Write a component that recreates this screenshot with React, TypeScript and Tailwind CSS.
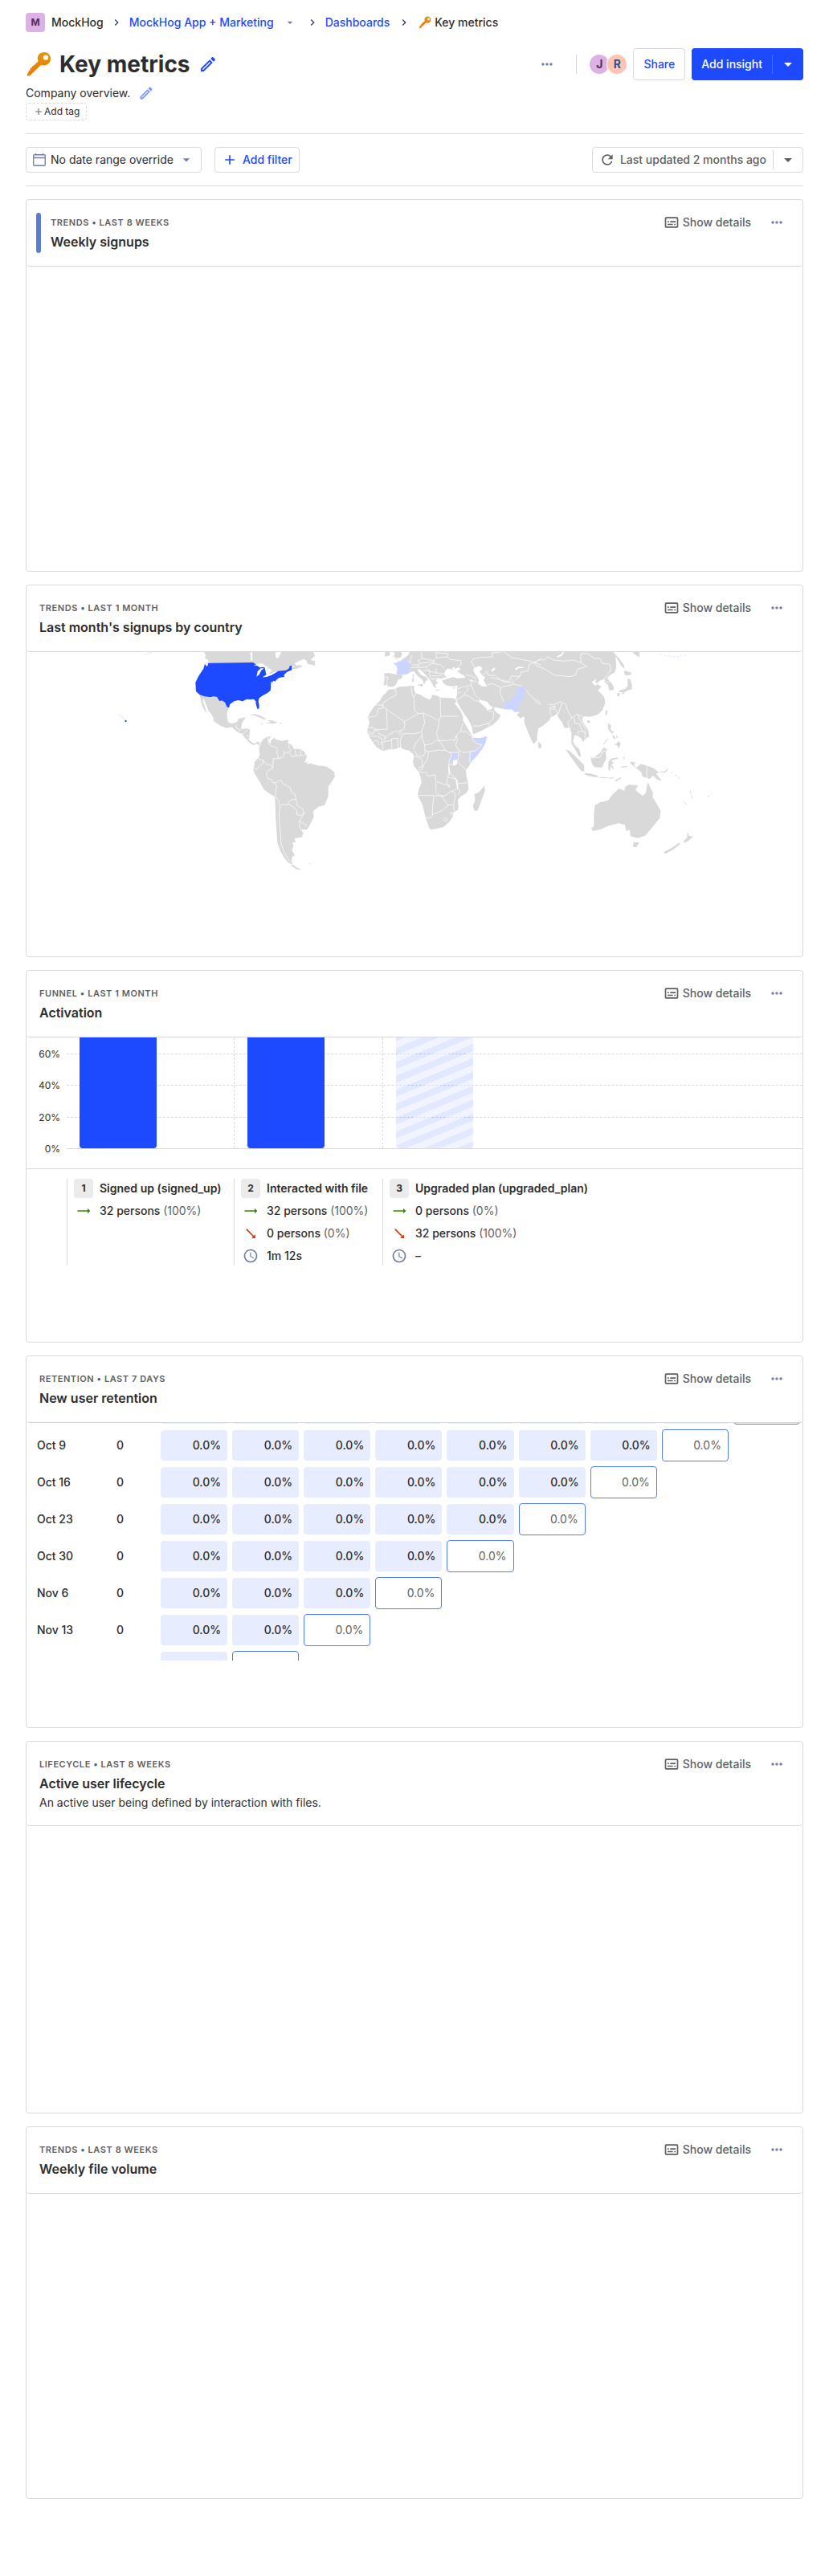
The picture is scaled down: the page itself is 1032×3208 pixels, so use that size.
import React from "react";
import {
  MdAdd,
  MdArrowDropDown,
  MdChevronRight,
  MdMoreHoriz,
  MdOutlineEdit,
  MdOutlineSubtitles,
  MdRefresh,
  MdSchedule,
  MdTrendingFlat,
} from "react-icons/md";

function KeyIcon({ className }: { className: string }) {
  return (
    <svg viewBox="0 0 32 32" className={className} aria-hidden="true">
      <defs>
        <linearGradient id="keyFill" x1="0" y1="0" x2="0" y2="1">
          <stop offset="0" stopColor="#e59600" />
          <stop offset="1" stopColor="#ea7a10" />
        </linearGradient>
      </defs>
      <path
        fillRule="evenodd"
        fill="url(#keyFill)"
        d="M23 1C17.800 1 14.500 4.800 14.800 9.200L15.600 12.200L9.200 18.200L7.800 18.400L7.600 20.800L5.400 20.800L5.800 23.600L3.600 23.800L3.800 26L2.300 27.300L1.600 30.500L5 30.200L19.300 16.700C25.600 19.200 31 14.800 31 9C31 4.500 27.500 1 23 1ZM25 4.400A3.200 3.200 0 1 1 25 10.800A3.200 3.200 0 1 1 25 4.400Z"
      />
    </svg>
  );
}

function CalendarIcon() {
  return (
    <svg viewBox="0 0 16 16" className="size-4 text-[#747ea2]" fill="none" stroke="currentColor" aria-hidden="true">
      <rect x="0.750" y="1.750" width="14.500" height="13.500" rx="1" strokeWidth="1.300" />
      <path d="M1 5.500H15M3.500 0V2M12.500 0V2" strokeWidth="1.300" />
    </svg>
  );
}

/* World map, drawn at three units to the pixel. */
function WorldMap() {
  return (
    <svg viewBox="99 2436 2898 1137" className="block w-full" role="img" aria-label="World map of signups by country">
      <g transform="translate(0 2100)">
        <path d="M466 590L473 592L472 597L467 598Z" fill="#1d4aff" />
        <path d="M446 573l4 3M455 578l4 2M462 583l5 3" stroke="#9fb2ff" strokeWidth="2" />
        <path d="M541 345L552 343L570 336" stroke="#d5ddff" strokeWidth="2" fill="none" />
      </g>
      <g transform="translate(660 2400)">
        <g fill="#d9d9d9">
          <path d="M98 34L108 44L106 60L116 64L120 76L285 76L300 82L330 90L345 105L345 118L355 116L378 108L408 104L428 87L440 90L432 98L444 100L470 90L462 84L446 86L440 78L460 68L475 62L486 70L488 80L517 86L516 70L500 66L516 50L510 34Z" />
          <path d="M86 196L104 202L125 205L138 202L150 204L160 220L168 217L180 224L188 242L196 243L188 262L188 280L192 298L205 304L225 298L232 284L258 280L250 292L242 304L236 308L222 306L216 320L205 316L185 320L160 310L138 294L137 282L128 266L118 255L112 238L104 218L96 206Z" />
          <path d="M86 196L98 202L98 222L104 238L114 266L102 252L92 228Z" />
          <path d="M205 316L218 306L234 306L244 304L240 320L262 322L273 324L272 345L270 362L278 372L290 378L303 370L312 378L308 386L300 378L288 384L272 376L256 358L244 342L228 336Z" />
          <path d="M272 273L290 267L312 274L334 286L328 289L302 278L286 272Z" />
          <path d="M340 291L358 292L378 300L360 304L332 302L350 298ZM384 301h8v3h-8ZM313 302l10 1l-2 3l-6 -1Z" />
          <path d="M312 378L322 362L340 352L352 350L345 362L348 374L352 366L365 356L372 364L395 368L410 364L418 366L414 374L430 384L438 398L462 398L476 408L486 426L482 438L476 450L490 444L498 452L526 460L545 462L560 464L588 484L591 500L576 526L566 538L566 575L552 608L530 614L510 630L512 652L496 684L486 700L468 699L460 692L473 714L466 728L440 732L444 746L432 748L436 760L430 776L441 796L432 800L428 816L434 828L420 826L402 806L388 780L376 750L374 720L370 660L368 600L366 576L348 566L326 550L306 514L290 488L286 474L290 458L290 448L304 432L310 420L308 396Z" />
          <path d="M434 830L450 842L466 848L448 848L425 832ZM488 828l10 -3v4Z" />
        </g>
        <path fill="#1d4aff" d="M106 77L285 75L300 84L328 92L335 122L322 131L352 121L358 116L378 107L408 104L420 96L422 88L430 87L430 103L412 110L400 122L403 128L382 132L372 140L368 146L362 143L356 150L352 163L350 180L338 190L322 198L308 208L305 220L308 236L307 248L301 248L296 232L295 220L288 212L272 213L262 212L246 220L230 216L214 220L198 232L196 243L188 242L180 224L168 217L160 220L150 204L138 202L125 205L104 202L86 196L72 183L70 150L82 125L100 98Z" />
        <g fill="#fff">
          <path d="M274 38L283 37L282 56L284 66L276 67L277 52ZM370 34H392L386 46L380 58L372 59L368 48Z" />
          <path d="M288 85L304 80L318 78L332 88L344 92L336 96L326 92L310 94L302 88Z" />
          <path d="M298 128L302 108L314 97L326 97L316 104L308 120Z" />
          <path d="M328 95L342 98L352 98L354 106L346 114L338 120L332 112L336 102Z" />
          <path d="M321 130L336 120L352 118L362 112L378 107L372 112L354 122L336 129Z" />
          <path d="M104 78L112 90L117 84L116 76Z" />
          <path d="M484 450L490 445L498 449L492 456ZM344 362l5 0l3 12l-4 3l-5 -8ZM352 148l4 -2l-1 14l-4 4Z" />
        </g>
        <g fill="none" stroke="#fff" strokeWidth="2.200" strokeLinejoin="round">
          <path d="M342 352L340 364L346 384L370 392L376 396L374 412L380 434L398 428L402 412L420 410L426 402L418 392L420 382" />
          <path d="M420 410L430 428L446 424L442 402M446 424L462 422L464 400M462 422L474 424L484 416M402 412L398 404" />
          <path d="M300 432L324 442L336 456L352 460L358 470M290 470L298 476L310 460L324 450L322 440M380 434L360 434L360 460L358 470L340 480L334 496L342 510L356 514L358 524L368 524" />
          <path d="M368 524L390 514L396 528L424 542L428 558L440 566L446 586L430 588L418 596L416 606L392 606L386 612L380 590L368 574L370 558L372 540Z" />
          <path d="M386 612L382 640L384 680L388 720L390 754L400 780L410 800L424 820" />
          <path d="M418 604L440 618L450 630L448 644L466 646L474 634L470 622L450 610L446 588M474 634L478 636L470 648L458 668L458 694M458 668L474 676L488 686M308 376L314 384" />
          <path d="M230 336L240 324L258 322M246 342L268 324M268 350L258 348M222 306L222 320L234 326M272 362L264 362" />
        </g>
      </g>
      <g transform="translate(1290 2400)">
        <g fill="#d9d9d9">
          <path d="M162 176L186 174L200 166L230 164L250 162L258 164L256 178L262 190L280 196L300 208L314 214L322 206L322 196L340 198L356 206L380 208L400 208L414 214L412 228L406 226L430 256L440 282L438 290L446 304L456 320L470 344L478 356L500 358L528 352L524 372L512 396L494 420L468 448L462 462L450 478L452 500L458 524L460 548L450 564L430 576L420 588L422 612L420 626L404 634L402 648L390 668L366 690L350 694L320 700L312 694L310 684L298 650L288 606L270 572L272 556L284 524L280 500L274 484L256 462L252 446L256 430L254 418L238 404L218 400L206 392L194 396L178 400L162 400L140 406L118 392L104 376L90 352L82 334L84 318L90 300L84 278L96 256L112 234L128 220L140 198L152 188Z" />
          <path d="M518 534L522 552L512 580L494 628L482 630L476 612L484 590L482 568L500 558L512 544Z" />
          <path d="M144 116L162 114L190 120L214 124L210 134L196 140L190 156L178 166L162 166L156 160L142 160L146 138Z" />
          <path d="M176 62L190 56L178 52L186 46L180 34L208 34L212 46L206 56L192 60ZM148 34L166 34L166 48L148 54ZM249 135l6 -1v14h-5Z" />
          <path d="M216 62L226 54L236 46L240 34L782 34L782 272L768 278L762 290L740 310L720 322L716 350L716 364L706 378L700 376L688 350L676 320L668 300L668 276L654 284L640 270L650 262L640 256L630 258L622 250L594 250L576 246L560 242L552 244L540 236L530 222L520 218L508 216L500 212L500 222L510 232L524 244L530 252L546 250L556 236L556 252L564 262L580 272L570 290L550 308L530 318L510 330L480 342L476 340L472 316L460 290L444 268L430 246L420 228L416 216L414 206L418 190L416 172L420 162L398 164L380 162L366 154L362 142L386 134L400 130L420 134L448 132L444 124L430 118L418 108L432 100L420 94L400 104L390 98L380 98L372 108L368 122L378 130L360 136L344 134L338 142L346 152L336 158L340 172L328 164L322 150L314 138L300 122L284 104L272 98L270 106L284 122L302 130L310 140L300 144L294 158L288 140L268 124L256 108L242 112L240 92Z" />
          <path d="M268 158L290 155L287 166ZM336 178h16v3h-14ZM400 170l12 -3l-6 6ZM722 372L732 384L730 395L722 394Z" />
        </g>
        <g fill="#ccd5ff">
          <path d="M176 78L192 76L198 70L206 70L216 61L232 70L245 76L240 92L242 112L228 120L218 120L204 123L190 118L194 100L190 86ZM252 121l3 -4v15l-4 -3Z" />
          <path d="M594 250L590 222L614 222L622 206L634 200L644 168L664 164L676 180L664 184L668 204L654 230L640 238L650 254L638 262L630 258L622 250Z" />
          <path d="M476 358L500 358L528 352L524 372L512 396L494 420L466 450L464 412L488 404L510 382L490 376L478 366Z" />
          <path d="M396 412L418 411L424 426L418 440L400 446L388 451L392 434L398 426Z" />
        </g>
        <g fill="#fff">
          <path d="M478 98L498 88L510 94L510 102L500 108L512 124L522 130L516 142L529 164L510 164L496 154L498 138L488 124L480 110Z" />
          <path d="M402 440L418 438L416 456L402 461ZM634 98L644 91L664 92V96L646 97L636 104ZM544 104L556 94L560 98L548 110ZM396 98l10 -6l4 6l-8 5Z" />
          <path d="M412 512l5 2l4 30l-4 2ZM384 462l4 0l4 30l-3 4Z" />
        </g>
        <g fill="none" stroke="#fff" strokeWidth="2.200" strokeLinejoin="round">
          <path d="M186 174L190 196L168 208L140 226L140 238M110 234L140 234L140 246L122 248L120 266L110 276L86 280M140 238L154 250L156 324L112 326L100 318L84 318" />
          <path d="M154 250L220 296L222 306M220 296L272 266L258 254L256 210L248 190L246 166M262 190L256 204M272 266L290 264L350 292L356 276L354 206M356 276L424 276" />
          <path d="M350 292L348 312L340 340L348 366M290 264L296 300L284 334M222 306L218 326L200 330L216 344L222 340L256 342L284 334L288 360L296 384L318 380L338 366L348 366M288 344L278 360L262 376L254 400" />
          <path d="M206 392L204 366L214 344M198 396L194 360M174 400L172 360L198 358M144 364L160 346L190 330L206 346M140 404L140 372L172 366M84 334L104 340L112 326L124 334L128 344L148 350L144 364M98 352L120 350L136 360L134 384M104 376L112 366L122 370L124 384M84 344H104" />
          <path d="M296 384L296 402L310 408L350 402L374 404L362 384L348 366L380 368L396 362L408 368L414 348L418 364L412 384L424 404M374 404L390 412L424 410M258 404L270 424" />
          <path d="M414 348L430 332L450 334L474 352L476 366L490 378L510 382L488 404L466 408L444 412L424 404M430 332L438 304M466 408L464 448M424 410L420 440M418 446L450 476" />
          <path d="M310 408L308 430L296 452L286 474L274 478M274 484L302 486L308 500L334 494L338 520L352 524L380 534L388 542L388 532L378 528L382 504L386 490L386 456L388 440L396 424L390 410" />
          <path d="M258 426L272 426L292 424L300 404M270 430L286 436L288 462L270 470M386 456L402 456M392 490L412 508L416 528L458 524M338 524L338 560L350 572L370 574L396 556L418 546M384 504L412 510" />
          <path d="M272 572L320 572L366 574M330 576L326 610L324 650L310 658L300 652M324 642L344 636L364 626L384 608L370 590L360 576M384 608L404 606L410 580L408 562L396 556M404 606L406 630M418 514L420 546L428 556L422 568M366 662L374 656L382 662L374 670ZM392 638l6 -3l4 6l-6 3Z" />
          <path d="M470 72L480 60L510 56L550 54L546 40L590 34L620 56L660 64L706 74L686 84L682 106L654 112L656 122L634 140M470 72L484 96M512 124L530 108L532 122L560 124L592 150L610 146L620 126L652 126M540 130L580 140L620 150" />
          <path d="M528 160L548 154L580 168L578 190L592 222M580 168L612 160L630 156L660 164M620 136L630 156M706 74L740 58L782 66M706 74L740 90L782 106" />
          <path d="M468 138L470 160L484 196L500 212M440 196L460 200L484 218L500 222M418 174L440 166L470 160M440 196L456 180L458 168M418 214L440 200M420 184L430 190" />
          <path d="M476 312L500 312L534 302L540 316M534 302L552 284L554 262M526 252L552 260M450 122L470 124L490 136M460 140L490 146M470 140L480 152M676 180L692 200L710 214L740 230L782 232M706 216L720 228L766 242L782 244M766 242V270" />
          <path d="M232 70L246 78M242 72L248 48M248 84L272 84L282 78L270 68L286 60L282 34M286 60L330 68L340 58L338 38L384 42M244 94L268 94L300 92L320 80L332 78M330 68L332 80L356 84L370 98M300 92L314 108L342 114L370 116M340 58L380 54L392 64L430 68L432 82L420 94M312 100L316 130L330 142M320 124L342 126L362 122M272 84L270 94M282 78L330 72M380 54L384 42M146 128L158 130L154 160M320 136L348 134M290 104L308 106M338 96L340 114M364 128V138" />
        </g>
      </g>
      <g transform="translate(1920 2400)">
        <g fill="#d9d9d9">
          <path d="M100 34L370 34L378 52L382 90L376 112L358 122L348 134L360 148L372 164L372 178L356 180L350 158L338 150L338 138L322 142L310 154L302 148L308 136L290 148L302 162L312 156L326 166L312 180L330 196L338 208L340 228L328 256L312 270L282 278L262 276L254 284L258 300L276 326L280 352L262 364L258 374L252 360L240 350L226 346L222 360L220 372L232 386L244 400L250 428L240 424L228 400L214 378L214 340L206 318L188 320L180 300L164 278L160 266L150 274L132 276L100 290Z" />
          <path d="M90 372L102 384L99 396L91 394ZM344 252L349 256L345 274L340 268ZM272 293L282 290L284 297L276 303Z" />
          <path d="M366 34L374 40L390 58L410 84L412 98L402 90L388 66ZM410 106L436 112L438 120L420 124L412 118ZM424 136L434 138L440 160V174L424 180L410 186L390 186L398 178L414 174L424 164ZM384 192L394 188L394 202L386 200ZM400 188l14 -2l-8 8ZM440 34L468 34L467 56L452 46Z" />
          <path d="M350 302L362 308L360 326L374 336L364 340L352 326ZM366 346l10 4l2 12l-8 -4ZM380 344l8 12l-5 2ZM374 384L392 368L398 380L390 396L384 384ZM332 380L350 358L352 360L336 380Z" />
          <path d="M192 400L208 406L238 434L262 460L262 482L250 480L226 448ZM262 488L284 490L314 498L312 504L290 502L264 494ZM318 503h12l20 2v3l-32 -2ZM352 506l20 -2v3l-18 2ZM376 516L398 504L400 508L380 520Z" />
          <path d="M286 430L300 430L322 412L334 392L348 400L342 412L344 436L336 450L328 468L300 466L290 452ZM352 448L362 434L386 430L388 434L362 441L372 450L364 456L374 474L366 470L360 460L358 482L352 474Z" />
          <path d="M408 424l5 6l-3 10ZM432 446L448 446L452 452L446 458L456 468L474 454L500 462L524 472L542 488L530 490L552 518L534 512L518 498L506 510L480 502L474 484L456 470L438 456ZM398 464l24 -3v4l-22 3ZM546 482L562 482L574 472L576 475L564 487L548 486Z" />
          <path d="M500 522L510 546L518 560L518 580L532 602L548 630L544 656L522 684L490 722L460 731L434 724L432 700L418 704L414 682L390 676L350 686L320 700L294 704L288 694L298 688L298 640L302 608L320 598L352 590L366 570L392 546L412 554L416 538L430 532L462 534L454 552L480 574L492 562L496 536Z" />
          <path d="M446 746L468 748L456 766L444 764ZM648 704L652 722L668 726L650 742L634 750L634 740L646 730ZM558 784L584 770L618 748L620 754L600 770L566 790ZM722 574l8 -2l-2 6ZM733 567l7 -3v2Z" />
        </g>
        <path d="M632 594L646 607M584 484l8 6M600 494l8 6M612 502l8 8M658 552l3 14M662 572l3 12" stroke="#d9d9d9" strokeWidth="2.500" />
        <path d="M162 54L176 48L184 36" stroke="#fff" strokeWidth="6" fill="none" />
        <path d="M544 46h6M562 49h5M578 51h6M594 53h6M606 55h8M620 51h6M636 48h6" stroke="#d5ddff" strokeWidth="2.500" />
        <g fill="none" stroke="#fff" strokeWidth="2.200" strokeLinejoin="round">
          <path d="M76 74L100 62L112 66L126 54L150 66L186 70L220 66L250 76L272 90L236 100L230 122L204 128L150 122L116 100L84 88L76 74M250 76L248 44L272 40L300 60L320 60L330 78L358 82L360 108L350 116M330 142L352 122M340 150L358 146" />
          <path d="M130 232L150 232L172 222L194 232L198 250L216 282L236 268L258 280M134 240L136 274M136 240H156M150 236L152 250L136 248M156 252L164 270L174 240L180 226M216 282L200 300L208 320L214 342M224 282L226 302L244 304L252 326L264 340M238 346L240 332L266 334L264 358M236 270L250 296L272 330M290 432L320 430L330 408L346 404M222 380L236 392M496 458L496 510" />
        </g>
      </g>
    </svg>
  );
}

type CardProps = {
  meta: string;
  title: string;
  description?: string;
  accent?: boolean;
  children?: React.ReactNode;
};

function Card({ meta, title, description, accent, children }: CardProps) {
  return (
    <section className="flex h-[464px] flex-col overflow-hidden rounded border border-[#d9d9d9] bg-white">
      <header className="flex shrink-0 items-start rounded-b border-b border-[#d9d9d9] py-4 pr-4 pl-3">
        {accent && <span className="mr-2 h-[50px] w-1.5 shrink-0 rounded-full bg-[#597dce]" />}
        <div className="min-w-0 flex-1 px-1 pt-1 pb-0.5">
          <p className="text-[11px] leading-4 font-semibold tracking-wider text-[#5f5f5f] uppercase">{meta}</p>
          <h2 className="mt-1 text-base leading-6 font-semibold text-[#2d2d2d]">{title}</h2>
          {description && <p className="mt-0.5 text-sm leading-5 text-[#2d2d2d]">{description}</p>}
        </div>
        <div className="flex items-center">
          <button type="button" className="flex h-6 items-center gap-1 text-sm font-medium text-[#5f5f5f]">
            <MdOutlineSubtitles className="size-5" />
            Show details
          </button>
          <button type="button" aria-label="More options" className="ml-4 flex h-6 w-8 items-center justify-center text-[#747ea2]">
            <MdMoreHoriz className="size-5" />
          </button>
        </div>
      </header>
      {children}
    </section>
  );
}

function FunnelChart() {
  const rows = [
    { label: "60%", height: "h-[21px]" },
    { label: "40%", height: "h-[39px]" },
    { label: "20%", height: "h-10" },
    { label: "0%", height: "h-[39px]" },
  ];
  return (
    <div className="relative h-[163px] shrink-0">
      {rows.map((row, i) => (
        <div key={row.label} className={"flex " + row.height}>
          <span className="flex w-[50px] items-end justify-end pr-2 text-xs text-[#2d2d2d]">
            <span className="-mb-2 leading-4">{row.label}</span>
          </span>
          <span
            className={
              i === 3 ? "flex-1 border-b border-[#d9d9d9]" : "flex-1 border-b border-dashed border-[#d9d9d9]"
            }
          />
        </div>
      ))}
      <div className="absolute inset-x-0 top-0 flex h-[138px] pl-[50px]">
        <div className="w-52 pl-4">
          <div className="h-full w-24 rounded-b bg-[#1d4aff]" />
        </div>
        <div className="w-[185px] border-l border-dashed border-[#d9d9d9] pl-4">
          <div className="h-full w-24 rounded-b bg-[#1d4aff]" />
        </div>
        <div className="flex-1 border-l border-dashed border-[#d9d9d9] pl-4">
          <div className="h-full w-24 rounded-b bg-[#1d4aff]/13 bg-[repeating-linear-gradient(-22.5deg,transparent_0_8px,rgba(255,255,255,0.5)_8px_16px)]" />
        </div>
      </div>
    </div>
  );
}

type Step = {
  name: string;
  width: string;
  converted: [string, string];
  dropped?: [string, string];
  time?: string;
};

const steps: Step[] = [
  { name: "Signed up (signed_up)", width: "w-52", converted: ["32 persons", "(100%)"] },
  {
    name: "Interacted with file",
    width: "w-[185px]",
    converted: ["32 persons", "(100%)"],
    dropped: ["0 persons", "(0%)"],
    time: "1m 12s",
  },
  {
    name: "Upgraded plan (upgraded_plan)",
    width: "flex-1",
    converted: ["0 persons", "(0%)"],
    dropped: ["32 persons", "(100%)"],
    time: "–",
  },
];

function StepLine({ icon, children }: { icon: React.ReactNode; children: React.ReactNode }) {
  return (
    <div className="flex h-6 items-center gap-2 text-sm font-medium whitespace-nowrap text-[#2d2d2d]">
      <span className="flex w-6 justify-center">{icon}</span>
      <span>{children}</span>
    </div>
  );
}

function FunnelLegend() {
  return (
    <div className="flex border-t border-[#d9d9d9] pt-3 pl-[50px]">
      {steps.map((step, i) => (
        <div key={step.name} className={"flex h-[108px] flex-col gap-1 border-l border-[#d9d9d9] pl-2 " + step.width}>
          <div className="flex h-6 items-center gap-2 text-sm font-semibold whitespace-nowrap text-[#2d2d2d]">
            <span className="flex size-6 items-center justify-center rounded bg-[#ebebeb] text-xs font-bold">
              {i + 1}
            </span>
            {step.name}
          </div>
          <StepLine icon={<MdTrendingFlat className="size-5 text-[#388600]" />}>
            {step.converted[0]} <span className="font-normal text-[#5f5f5f]">{step.converted[1]}</span>
          </StepLine>
          {step.dropped && (
            <StepLine icon={<MdTrendingFlat className="size-5 rotate-45 text-[#db3707]" />}>
              {step.dropped[0]} <span className="font-normal text-[#5f5f5f]">{step.dropped[1]}</span>
            </StepLine>
          )}
          {step.time && <StepLine icon={<MdSchedule className="size-5 text-[#747ea2]" />}>{step.time}</StepLine>}
        </div>
      ))}
    </div>
  );
}

type Cohort = { date: string; full: number; peek?: boolean };

/* Rows marked "peek" only show the edge of their cells above or below the scrolled area. */
const cohorts: Cohort[] = [
  { date: "Oct 2", full: 8, peek: true },
  { date: "Oct 9", full: 7 },
  { date: "Oct 16", full: 6 },
  { date: "Oct 23", full: 5 },
  { date: "Oct 30", full: 4 },
  { date: "Nov 6", full: 3 },
  { date: "Nov 13", full: 2 },
  { date: "Nov 20", full: 1, peek: true },
];

function RetentionTable() {
  return (
    <div className="h-[296px] shrink-0 overflow-hidden">
      <table className="-mt-[41px] w-full table-fixed text-sm text-[#2d2d2d]">
        <colgroup>
          <col className="w-[100px]" />
          <col className="w-16" />
          {Array.from({ length: 9 }, (_, i) => (
            <col key={i} />
          ))}
        </colgroup>
        <tbody>
          {cohorts.map(({ date, full, peek }) => (
            <tr key={date} className="h-[46px]">
              <th scope="row" className="p-0 pl-[13px] text-left font-medium">{peek ? null : date}</th>
              <td className="p-0 pl-3 font-medium">{peek ? null : "0"}</td>
              {Array.from({ length: 9 }, (_, i) => (
                <td key={i} className="px-[3px] py-0 text-right">
                  {i < full && (
                    <div className="h-[38px] rounded bg-[#e8ecff] pr-2 leading-[38px] font-medium">
                      {peek ? null : "0.0%"}
                    </div>
                  )}
                  {i === full && (
                    <div className="h-10 rounded border border-[#527aff] pr-2 leading-[38px] text-[#5f5f5f]">
                      {peek ? null : "0.0%"}
                    </div>
                  )}
                </td>
              ))}
            </tr>
          ))}
        </tbody>
      </table>
    </div>
  );
}

export default function App() {
  return (
    <main className="bg-white px-8 pt-4 pb-24 font-['Inter',sans-serif] text-sm text-[#2d2d2d]">
      <nav aria-label="Breadcrumb" className="flex h-6 items-center font-medium whitespace-nowrap">
        <span className="mr-2 flex size-6 items-center justify-center rounded bg-[#dcb1e3] text-xs font-bold text-[#572e5e]">
          M
        </span>
        <span>MockHog</span>
        <MdChevronRight className="mx-2 size-4 text-[#35416b]" />
        <a href="#project" className="text-[#1d4aff]">MockHog App + Marketing</a>
        <button type="button" aria-label="Switch project" className="ml-2 flex size-6 items-center justify-center text-[#747ea2]">
          <MdArrowDropDown className="size-4" />
        </button>
        <MdChevronRight className="mx-2 size-4 text-[#35416b]" />
        <a href="#dashboards" className="text-[#1d4aff]">Dashboards</a>
        <MdChevronRight className="mx-2.5 size-4 text-[#35416b]" />
        <KeyIcon className="mr-1 size-4" />
        <span>Key metrics</span>
      </nav>

      <div className="mt-5 flex h-10 items-center">
        <KeyIcon className="mr-2.5 size-8" />
        <h1 className="text-[28px] leading-10 font-bold">Key metrics</h1>
        <button type="button" aria-label="Edit name" className="ml-2.5 text-[#1d4aff]">
          <MdOutlineEdit className="size-6" />
        </button>
        <div className="ml-auto flex items-center">
          <button type="button" aria-label="More options" className="flex size-10 items-center justify-center text-[#747ea2]">
            <MdMoreHoriz className="size-5" />
          </button>
          <span className="mx-4 h-6 w-px bg-[#d9d9d9]" />
          <div className="mr-2 flex">
            <span className="flex size-6 items-center justify-center rounded-full bg-[#dcb1e3] text-sm font-bold text-[#572e5e]">
              J
            </span>
            <span className="-ml-0.5 flex size-6 items-center justify-center rounded-full bg-[#ffc4b2] text-sm font-bold text-[#35508c] ring-1 ring-white">
              R
            </span>
          </div>
          <button type="button" className="mr-2 h-10 rounded border border-[#d9d9d9] px-3 font-medium text-[#1d4aff]">
            Share
          </button>
          <div className="flex h-10 items-center rounded bg-[#1d4aff] text-white">
            <button type="button" className="h-10 px-3 font-medium">Add insight</button>
            <span className="h-6 w-px bg-white/20" />
            <button type="button" aria-label="More insight types" className="flex h-10 w-[38px] items-center justify-center">
              <MdArrowDropDown className="size-6" />
            </button>
          </div>
        </div>
      </div>

      <div className="mt-1 flex h-6 items-center">
        <p>Company overview.</p>
        <button type="button" aria-label="Edit description" className="ml-2.5 text-[#1d4aff]/60">
          <MdOutlineEdit className="size-5" />
        </button>
      </div>
      <button type="button" className="flex h-[22px] items-center rounded border border-dashed border-[#d9d9d9] px-2 text-xs">
        <MdAdd className="size-3.5 text-[#747474]" />
        Add tag
      </button>

      <div className="mt-4 flex items-center border-y border-[#d9d9d9] py-4">
        <button type="button" className="mr-4 flex h-8 items-center rounded border border-[#d9d9d9] px-2">
          <CalendarIcon />
          <span className="mx-1.5">No date range override</span>
          <MdArrowDropDown className="size-5 text-[#747ea2]" />
        </button>
        <button type="button" className="flex h-8 items-center rounded border border-[#d9d9d9] px-2 font-medium text-[#1d4aff]">
          <MdAdd className="mr-1.5 size-5" />
          Add filter
        </button>
        <div className="ml-auto flex h-8 items-center rounded border border-[#d9d9d9] text-[#5f5f5f]">
          <button type="button" className="flex h-full items-center px-2 font-medium">
            <MdRefresh className="mr-1.5 size-5" />
            Last updated 2 months ago
          </button>
          <span className="h-6 w-px bg-[#d9d9d9]" />
          <button type="button" aria-label="Refresh options" className="flex h-full w-9 items-center justify-center">
            <MdArrowDropDown className="size-6" />
          </button>
        </div>
      </div>

      <div className="mt-4 flex flex-col gap-4">
        <Card meta="Trends • Last 8 weeks" title="Weekly signups" accent />
        <Card meta="Trends • Last 1 month" title="Last month's signups by country">
          <WorldMap />
        </Card>
        <Card meta="Funnel • Last 1 month" title="Activation">
          <FunnelChart />
          <FunnelLegend />
        </Card>
        <Card meta="Retention • Last 7 days" title="New user retention">
          <RetentionTable />
        </Card>
        <Card
          meta="Lifecycle • Last 8 weeks"
          title="Active user lifecycle"
          description="An active user being defined by interaction with files."
        />
        <Card meta="Trends • Last 8 weeks" title="Weekly file volume" />
      </div>
    </main>
  );
}
